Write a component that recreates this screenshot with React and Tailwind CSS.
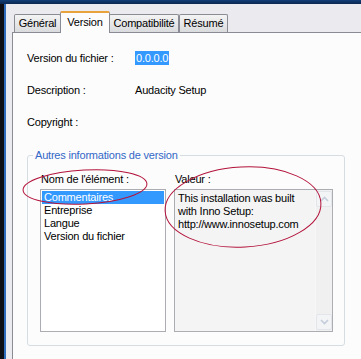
import React from 'react';

const TABS = [
    { label: 'Général', w: 47 },
    { label: 'Version', w: 50, active: true },
    { label: 'Compatibilité', w: 70 },
    { label: 'Résumé', w: 49 },
];

const ITEMS = ['Commentaires', 'Entreprise', 'Langue', 'Version du fichier'];

function Tab({ label, w, active }) {
    if (active) {
        return (
            <div
                style={{ width: w }}
                className="relative z-10 -mb-px h-[22px] flex items-start justify-center pt-[3px] bg-[#fcfcfc] border-x border-t-2 border-x-[#898c95] border-t-[#e8a33c] rounded-t-[2px] -mx-px"
            >
                {label}
            </div>
        );
    }
    return (
        <div
            style={{ width: w }}
            className="h-[18px] flex items-center justify-center bg-gradient-to-b from-[#f4f4f4] to-[#dadbde] border border-b-0 border-[#898c95] rounded-t-[2px]"
        >
            {label}
        </div>
    );
}

function ScrollArrow({ up }) {
    return (
        <div className="h-[16px] w-[16px] flex items-center justify-center border border-[#e2e5ea] bg-[#f3f4f6] rounded-[2px]">
            <svg width="9" height="6" viewBox="0 0 9 6">
                <path d={up ? 'M1 5 L4.5 1.5 L8 5' : 'M1 1 L4.5 4.5 L8 1'} fill="none" stroke="#c4cddb" strokeWidth="1.6" />
            </svg>
        </div>
    );
}

export default function App() {
    return (
        <div className="relative w-[361px] h-[359px] overflow-hidden flex flex-col bg-[#0c2b55] font-['Liberation_Sans',Arial,sans-serif] text-[11px] tracking-[-0.2px] text-black leading-[13px]">
            {/* window top edge */}
            <div className="h-[4px] bg-gradient-to-b from-[#123f78] to-[#0a2750]" />
            <div className="flex-1 flex">
                <div className="w-[4px] bg-[#0d0f14]" />
                <div className="w-[2px] bg-[#2f6cbc]" />
                <div className="flex-1 flex flex-col bg-[#ebeaee] pl-[6px]">
                    {/* tabs */}
                    <div className="h-[28px] flex items-end pl-[2px]">
                        {TABS.map(t => <Tab key={t.label} {...t} />)}
                    </div>

                    {/* tab page */}
                    <div className="flex-1 bg-[#fcfcfc] border-t border-l border-[#898c95] pl-[14px] pt-[18px]">
                        <div className="grid grid-cols-[108px_1fr] gap-y-[18px]">
                            <div className="h-[14px] leading-[14px]">Version du fichier :</div>
                            <div className="h-[14px] leading-[14px]">
                                <span className="bg-[#3399ff] text-white px-[1px] py-[1px]">0.0.0.0</span>
                            </div>
                            <div className="h-[14px] leading-[14px]">Description :</div>
                            <div className="h-[14px] leading-[14px]">Audacity Setup</div>
                            <div className="h-[14px] leading-[14px]">Copyright :</div>
                            <div className="h-[14px] leading-[14px]" />
                        </div>

                        <fieldset className="mt-[19px] w-[318px] border border-[#d5dde3] rounded-[3px] pl-[12px] pr-[11px] pb-[13px]">
                            <legend className="-ml-[7px] px-[2px] text-[#3268c8] leading-[14px]">Autres informations de version</legend>
                            <div className="mt-[10px] grid grid-cols-[126px_159px] gap-x-[8px]">
                                <div className="pl-[1px] leading-[14px]">Nom de l'élément :</div>
                                <div className="pl-[1px] leading-[14px]">Valeur :</div>
                                <div className="mt-[3px] h-[143px] border border-[#abadb3] bg-white p-px">
                                    {ITEMS.map((it, i) => (
                                        <div key={it} className={`h-[13px] pl-[2px] leading-[13px] ${i === 0 ? 'bg-[#3399ff] text-white' : ''}`}>{it}</div>
                                    ))}
                                </div>
                                <div className="mt-[3px] h-[143px] border border-[#abadb3] bg-[#f4f4f4] flex">
                                    <div className="flex-1 pl-[3px] pt-[2px] leading-[13px]">
                                        This installation was built<br />
                                        with Inno Setup:<br />
                                        http://www.innosetup.com
                                    </div>
                                    <div className="w-[17px] flex flex-col justify-between items-center py-[1px] bg-[#f0f0f0] border-l border-[#f7f7f7]">
                                        <ScrollArrow up />
                                        <ScrollArrow />
                                    </div>
                                </div>
                            </div>
                        </fieldset>
                    </div>
                </div>
            </div>

            {/* hand-drawn red annotations */}
            <svg className="absolute inset-0 pointer-events-none" width="361" height="359">
                <ellipse cx="85" cy="187" rx="62" ry="17" transform="rotate(-3 85 187)" fill="none" stroke="#b3123a" strokeWidth="1" />
                <ellipse cx="243" cy="207" rx="78" ry="40" transform="rotate(-3 243 207)" fill="none" stroke="#b3123a" strokeWidth="1" />
            </svg>
        </div>
    );
}
